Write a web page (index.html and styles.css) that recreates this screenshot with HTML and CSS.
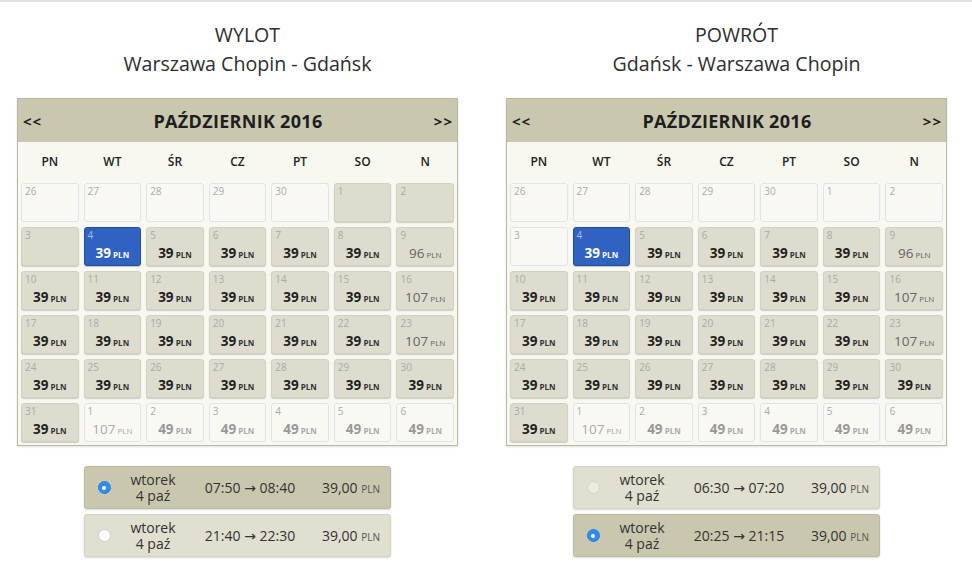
FILE: index.html
```html
<!DOCTYPE html>
<html lang="pl">
<head>
<meta charset="utf-8">
<title>Kalendarz lotów</title>
<link rel="stylesheet" href="styles.css">
</head>
<body>
<div class="page">
  <section class="panel">
    <h2 class="title">WYLOT<br>Warszawa Chopin - Gdańsk</h2>
    <div class="cal">
      <div class="cal-head"><span class="nav">&lt;&lt;</span><span class="month">PAŹDZIERNIK 2016</span><span class="nav">&gt;&gt;</span></div>
      <div class="dows"><span>PN</span><span>WT</span><span>ŚR</span><span>CZ</span><span>PT</span><span>SO</span><span>N</span></div>
      <div class="grid">
        <div class="cell e"><span class="d">26</span></div>
        <div class="cell e"><span class="d">27</span></div>
        <div class="cell e"><span class="d">28</span></div>
        <div class="cell e"><span class="d">29</span></div>
        <div class="cell e"><span class="d">30</span></div>
        <div class="cell f"><span class="d">1</span></div>
        <div class="cell f"><span class="d">2</span></div>

        <div class="cell f"><span class="d">3</span></div>
        <div class="cell s"><span class="d">4</span><span class="p"><b>39</b> PLN</span></div>
        <div class="cell f"><span class="d">5</span><span class="p"><b>39</b> PLN</span></div>
        <div class="cell f"><span class="d">6</span><span class="p"><b>39</b> PLN</span></div>
        <div class="cell f"><span class="d">7</span><span class="p"><b>39</b> PLN</span></div>
        <div class="cell f"><span class="d">8</span><span class="p"><b>39</b> PLN</span></div>
        <div class="cell f"><span class="d">9</span><span class="p hi"><b>96</b> PLN</span></div>

        <div class="cell f"><span class="d">10</span><span class="p"><b>39</b> PLN</span></div>
        <div class="cell f"><span class="d">11</span><span class="p"><b>39</b> PLN</span></div>
        <div class="cell f"><span class="d">12</span><span class="p"><b>39</b> PLN</span></div>
        <div class="cell f"><span class="d">13</span><span class="p"><b>39</b> PLN</span></div>
        <div class="cell f"><span class="d">14</span><span class="p"><b>39</b> PLN</span></div>
        <div class="cell f"><span class="d">15</span><span class="p"><b>39</b> PLN</span></div>
        <div class="cell f"><span class="d">16</span><span class="p hi"><b>107</b> PLN</span></div>

        <div class="cell f"><span class="d">17</span><span class="p"><b>39</b> PLN</span></div>
        <div class="cell f"><span class="d">18</span><span class="p"><b>39</b> PLN</span></div>
        <div class="cell f"><span class="d">19</span><span class="p"><b>39</b> PLN</span></div>
        <div class="cell f"><span class="d">20</span><span class="p"><b>39</b> PLN</span></div>
        <div class="cell f"><span class="d">21</span><span class="p"><b>39</b> PLN</span></div>
        <div class="cell f"><span class="d">22</span><span class="p"><b>39</b> PLN</span></div>
        <div class="cell f"><span class="d">23</span><span class="p hi"><b>107</b> PLN</span></div>

        <div class="cell f"><span class="d">24</span><span class="p"><b>39</b> PLN</span></div>
        <div class="cell f"><span class="d">25</span><span class="p"><b>39</b> PLN</span></div>
        <div class="cell f"><span class="d">26</span><span class="p"><b>39</b> PLN</span></div>
        <div class="cell f"><span class="d">27</span><span class="p"><b>39</b> PLN</span></div>
        <div class="cell f"><span class="d">28</span><span class="p"><b>39</b> PLN</span></div>
        <div class="cell f"><span class="d">29</span><span class="p"><b>39</b> PLN</span></div>
        <div class="cell f"><span class="d">30</span><span class="p"><b>39</b> PLN</span></div>

        <div class="cell f"><span class="d">31</span><span class="p"><b>39</b> PLN</span></div>
        <div class="cell e"><span class="d">1</span><span class="p hi"><b>107</b> PLN</span></div>
        <div class="cell e"><span class="d">2</span><span class="p"><b>49</b> PLN</span></div>
        <div class="cell e"><span class="d">3</span><span class="p"><b>49</b> PLN</span></div>
        <div class="cell e"><span class="d">4</span><span class="p"><b>49</b> PLN</span></div>
        <div class="cell e"><span class="d">5</span><span class="p"><b>49</b> PLN</span></div>
        <div class="cell e"><span class="d">6</span><span class="p"><b>49</b> PLN</span></div>
      </div>
    </div>
    <div class="flights">
      <div class="flight sel">
        <span class="radio on"></span>
        <span class="day">wtorek<br>4 paź</span>
        <span class="time">07:50 → 08:40</span>
        <span class="price">39,00 <small>PLN</small></span>
      </div>
      <div class="flight">
        <span class="radio"></span>
        <span class="day">wtorek<br>4 paź</span>
        <span class="time">21:40 → 22:30</span>
        <span class="price">39,00 <small>PLN</small></span>
      </div>
    </div>
  </section>

  <section class="panel">
    <h2 class="title">POWRÓT<br>Gdańsk - Warszawa Chopin</h2>
    <div class="cal">
      <div class="cal-head"><span class="nav">&lt;&lt;</span><span class="month">PAŹDZIERNIK 2016</span><span class="nav">&gt;&gt;</span></div>
      <div class="dows"><span>PN</span><span>WT</span><span>ŚR</span><span>CZ</span><span>PT</span><span>SO</span><span>N</span></div>
      <div class="grid">
        <div class="cell e"><span class="d">26</span></div>
        <div class="cell e"><span class="d">27</span></div>
        <div class="cell e"><span class="d">28</span></div>
        <div class="cell e"><span class="d">29</span></div>
        <div class="cell e"><span class="d">30</span></div>
        <div class="cell e"><span class="d">1</span></div>
        <div class="cell e"><span class="d">2</span></div>

        <div class="cell e"><span class="d">3</span></div>
        <div class="cell s"><span class="d">4</span><span class="p"><b>39</b> PLN</span></div>
        <div class="cell f"><span class="d">5</span><span class="p"><b>39</b> PLN</span></div>
        <div class="cell f"><span class="d">6</span><span class="p"><b>39</b> PLN</span></div>
        <div class="cell f"><span class="d">7</span><span class="p"><b>39</b> PLN</span></div>
        <div class="cell f"><span class="d">8</span><span class="p"><b>39</b> PLN</span></div>
        <div class="cell f"><span class="d">9</span><span class="p hi"><b>96</b> PLN</span></div>

        <div class="cell f"><span class="d">10</span><span class="p"><b>39</b> PLN</span></div>
        <div class="cell f"><span class="d">11</span><span class="p"><b>39</b> PLN</span></div>
        <div class="cell f"><span class="d">12</span><span class="p"><b>39</b> PLN</span></div>
        <div class="cell f"><span class="d">13</span><span class="p"><b>39</b> PLN</span></div>
        <div class="cell f"><span class="d">14</span><span class="p"><b>39</b> PLN</span></div>
        <div class="cell f"><span class="d">15</span><span class="p"><b>39</b> PLN</span></div>
        <div class="cell f"><span class="d">16</span><span class="p hi"><b>107</b> PLN</span></div>

        <div class="cell f"><span class="d">17</span><span class="p"><b>39</b> PLN</span></div>
        <div class="cell f"><span class="d">18</span><span class="p"><b>39</b> PLN</span></div>
        <div class="cell f"><span class="d">19</span><span class="p"><b>39</b> PLN</span></div>
        <div class="cell f"><span class="d">20</span><span class="p"><b>39</b> PLN</span></div>
        <div class="cell f"><span class="d">21</span><span class="p"><b>39</b> PLN</span></div>
        <div class="cell f"><span class="d">22</span><span class="p"><b>39</b> PLN</span></div>
        <div class="cell f"><span class="d">23</span><span class="p hi"><b>107</b> PLN</span></div>

        <div class="cell f"><span class="d">24</span><span class="p"><b>39</b> PLN</span></div>
        <div class="cell f"><span class="d">25</span><span class="p"><b>39</b> PLN</span></div>
        <div class="cell f"><span class="d">26</span><span class="p"><b>39</b> PLN</span></div>
        <div class="cell f"><span class="d">27</span><span class="p"><b>39</b> PLN</span></div>
        <div class="cell f"><span class="d">28</span><span class="p"><b>39</b> PLN</span></div>
        <div class="cell f"><span class="d">29</span><span class="p"><b>39</b> PLN</span></div>
        <div class="cell f"><span class="d">30</span><span class="p"><b>39</b> PLN</span></div>

        <div class="cell f"><span class="d">31</span><span class="p"><b>39</b> PLN</span></div>
        <div class="cell e"><span class="d">1</span><span class="p hi"><b>107</b> PLN</span></div>
        <div class="cell e"><span class="d">2</span><span class="p"><b>49</b> PLN</span></div>
        <div class="cell e"><span class="d">3</span><span class="p"><b>49</b> PLN</span></div>
        <div class="cell e"><span class="d">4</span><span class="p"><b>49</b> PLN</span></div>
        <div class="cell e"><span class="d">5</span><span class="p"><b>49</b> PLN</span></div>
        <div class="cell e"><span class="d">6</span><span class="p"><b>49</b> PLN</span></div>
      </div>
    </div>
    <div class="flights">
      <div class="flight">
        <span class="radio grey"></span>
        <span class="day">wtorek<br>4 paź</span>
        <span class="time">06:30 → 07:20</span>
        <span class="price">39,00 <small>PLN</small></span>
      </div>
      <div class="flight sel">
        <span class="radio on"></span>
        <span class="day">wtorek<br>4 paź</span>
        <span class="time">20:25 → 21:15</span>
        <span class="price">39,00 <small>PLN</small></span>
      </div>
    </div>
  </section>
</div>
</body>
</html>
```
FILE: styles.css
```css
html, body {
  margin: 0;
  padding: 0;
  background: #fff;
}
body {
  font-family: "Open Sans", "DejaVu Sans", sans-serif;
  color: #333;
  border-top: 2px solid #e2e2e2;
  height: 574px;
  overflow: hidden;
}
.page {
  display: flex;
  gap: 48px;
  padding-left: 17px;
}
.panel {
  width: 441px;
  display: flex;
  flex-direction: column;
}
.title {
  margin: 18px 0 0 0;
  padding-left: 20px;
  text-align: center;
  font-weight: 400;
  font-size: 19.6px;
  line-height: 29px;
  color: #2e2e2e;
}
.cal {
  margin-top: 20px;
  border: 1px solid #b9b8a2;
  background: #f8f7f0;
  box-shadow: 0 1px 2px rgba(0,0,0,0.12);
}
.cal-head {
  height: 43px;
  background: #c9c8ae;
  display: flex;
  align-items: center;
  justify-content: space-between;
  padding: 0 4px 0 5px;
  font-weight: 700;
  color: #1e1e1e;
}
.nav {
  font-size: 15px;
  letter-spacing: 1px;
}
.month {
  font-size: 18px;
  letter-spacing: 0.3px;
  padding-top: 1px;
}
.dows {
  height: 38px;
  display: grid;
  grid-template-columns: repeat(7, 1fr);
  gap: 5px;
  padding: 0 3px;
  align-items: center;
  text-align: center;
  font-size: 12px;
  font-weight: 600;
  color: #222;
}
.grid {
  display: grid;
  grid-template-columns: repeat(7, 1fr);
  grid-auto-rows: 39px;
  gap: 5px;
  padding: 3px 3px 3px 3px;
}
.cell {
  border-radius: 3px;
  box-sizing: border-box;
  display: flex;
  flex-direction: column;
  padding: 1px 3px 0;
  position: relative;
}
.cell.f {
  background: #dedcce;
  border: 1px solid #d3d1c2;
  box-shadow: 0 1px 1px rgba(0,0,0,0.18);
}
.cell.e {
  background: #f9f8f3;
  border: 1px solid #dce5ee;
}
.cell.s {
  background: #2f62c3;
  border: 1px solid #224f9e;
  box-shadow: 0 1px 1px rgba(0,0,0,0.2);
}
.d {
  font-size: 10px;
  line-height: 12px;
  color: #aaa;
}
.cell.s .d {
  color: #a8bde3;
}
.p {
  margin-top: 4px;
  text-align: center;
  font-size: 8px;
  font-weight: 700;
  line-height: 16px;
  color: #333;
}
.p b {
  font-size: 13.5px;
  font-weight: 700;
  color: #222;
}
.p.hi, .p.hi b {
  font-weight: 400;
  color: #666;
}
.cell.e .p, .cell.e .p b {
  color: #aaa;
}
.cell.e .p b {
  color: #999;
}
.cell.e .p.hi b {
  color: #aaa;
}
.cell.s .p, .cell.s .p b {
  color: #fff;
}
.flights {
  margin-top: 20px;
  align-self: center;
  width: 307px;
  display: flex;
  flex-direction: column;
  gap: 5px;
}
.flight {
  height: 43px;
  box-sizing: border-box;
  border-radius: 3px;
  background: #e0dfd0;
  border: 1px solid #d4d2c3;
  box-shadow: 0 1px 2px rgba(0,0,0,0.15);
  display: grid;
  grid-template-columns: 16px 82px 112px 1fr;
  align-items: center;
  padding: 0 10px 0 11px;
  font-size: 14px;
  color: #333;
}
.flight.sel {
  background: #c9c8ae;
  border-color: #bcbaa2;
}
.radio {
  width: 13px;
  height: 13px;
  border-radius: 50%;
  background: #fff;
  border: 1px solid #cfcdc4;
  box-sizing: border-box;
  justify-self: center;
}
.radio.grey {
  background: #ecebe3;
  border-color: #d6d4c8;
}
.radio.on {
  background: #2d8cf5;
  border: 1px solid #2a7fe0;
  position: relative;
}
.radio.on::after {
  content: "";
  position: absolute;
  left: 50%;
  top: 50%;
  width: 4px;
  height: 4px;
  margin: -2px 0 0 -2px;
  border-radius: 50%;
  background: #fff;
}
.day {
  text-align: center;
  line-height: 16px;
}
.time {
  text-align: center;
}
.price {
  text-align: right;
}
.price small {
  font-size: 10px;
  color: #555;
}
```
